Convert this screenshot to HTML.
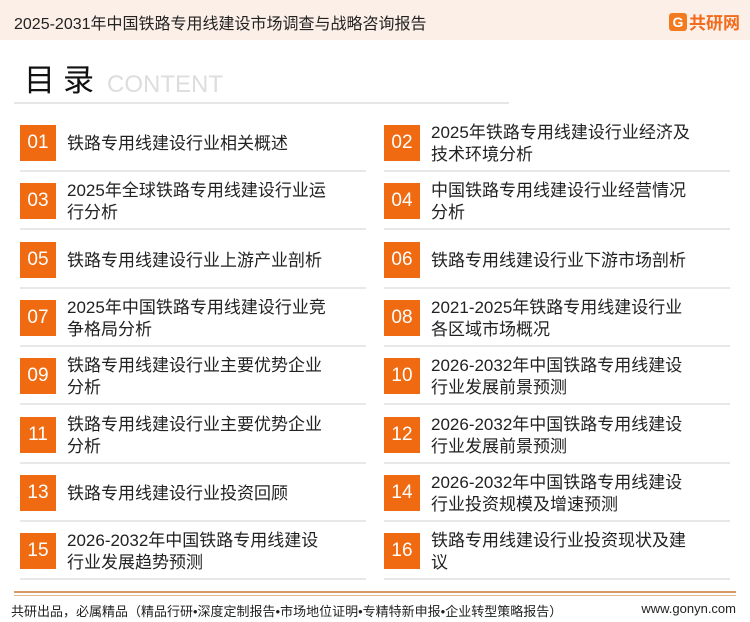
<!DOCTYPE html>
<html><head><meta charset="utf-8"><style>
*{margin:0;padding:0;box-sizing:border-box}
body{width:750px;height:622px;background:#fff;position:relative;overflow:hidden;font-family:"Liberation Sans","Noto Sans CJK SC",sans-serif;color:#222}
.hdr{position:absolute;left:0;top:0;width:750px;height:40px;background:#fcefe7}
.hdr .t{position:absolute;left:14px;top:10px;font-size:16px;color:#222}
.logo{position:absolute;right:10px;top:9px;font-size:17px;font-weight:bold;color:#f26a1b;display:flex;align-items:center;gap:2px}
.logo .g{width:18px;height:18px;background:#f47a20;border-radius:3px;color:#fff;font-size:14px;line-height:18px;text-align:center}
.mu{position:absolute;left:24px;top:64px;font-size:31px;line-height:34px;color:#111;letter-spacing:8px}
.ct{position:absolute;left:107px;top:72px;font-size:24px;line-height:26px;color:#ddd}
.sep{position:absolute;left:14px;top:102px;width:495px;height:2px;background:#e6e6e6}
.item{position:absolute;width:346px;height:46px}
.item .n{position:absolute;left:0;top:0;width:36px;height:36px;background:#ef6a10;color:#fff;font-size:19px;line-height:36px;text-align:center}
.item .x{position:absolute;left:47px;font-size:17px;line-height:22px;color:#222;white-space:nowrap}
.item:after{content:"";position:absolute;left:0;right:0;top:45px;height:2px;background:#e8e8e8}
.f1{position:absolute;left:14px;top:591px;width:722px;height:2px;background:#d99a68}
.f2{position:absolute;left:14px;top:595px;width:722px;height:1px;background:#e2b894}
.ft{position:absolute;left:11px;top:601px;font-size:13px;color:#222}
.fr{position:absolute;right:14px;top:601px;font-size:13px;color:#222}
</style></head><body>
<div class="hdr"><div class="t">2025-2031年中国铁路专用线建设市场调查与战略咨询报告</div>
<div class="logo"><div class="g">G</div>共研网</div></div>
<div class="mu">目录</div><div class="ct">CONTENT</div>
<div class="sep"></div>

<div class="item" style="left:20px;top:125px"><div class="n">01</div><div class="x" style="top:8px">铁路专用线建设行业相关概述</div></div>
<div class="item" style="left:384px;top:125px"><div class="n">02</div><div class="x" style="top:-3px">2025年铁路专用线建设行业经济及<br>技术环境分析</div></div>

<div class="item" style="left:20px;top:183px"><div class="n">03</div><div class="x" style="top:-3px">2025年全球铁路专用线建设行业运<br>行分析</div></div>
<div class="item" style="left:384px;top:183px"><div class="n">04</div><div class="x" style="top:-3px">中国铁路专用线建设行业经营情况<br>分析</div></div>

<div class="item" style="left:20px;top:242px"><div class="n">05</div><div class="x" style="top:8px">铁路专用线建设行业上游产业剖析</div></div>
<div class="item" style="left:384px;top:242px"><div class="n">06</div><div class="x" style="top:8px">铁路专用线建设行业下游市场剖析</div></div>

<div class="item" style="left:20px;top:300px"><div class="n">07</div><div class="x" style="top:-3px">2025年中国铁路专用线建设行业竞<br>争格局分析</div></div>
<div class="item" style="left:384px;top:300px"><div class="n">08</div><div class="x" style="top:-3px">2021-2025年铁路专用线建设行业<br>各区域市场概况</div></div>

<div class="item" style="left:20px;top:358px"><div class="n">09</div><div class="x" style="top:-3px">铁路专用线建设行业主要优势企业<br>分析</div></div>
<div class="item" style="left:384px;top:358px"><div class="n">10</div><div class="x" style="top:-3px">2026-2032年中国铁路专用线建设<br>行业发展前景预测</div></div>

<div class="item" style="left:20px;top:417px"><div class="n">11</div><div class="x" style="top:-3px">铁路专用线建设行业主要优势企业<br>分析</div></div>
<div class="item" style="left:384px;top:417px"><div class="n">12</div><div class="x" style="top:-3px">2026-2032年中国铁路专用线建设<br>行业发展前景预测</div></div>

<div class="item" style="left:20px;top:475px"><div class="n">13</div><div class="x" style="top:8px">铁路专用线建设行业投资回顾</div></div>
<div class="item" style="left:384px;top:475px"><div class="n">14</div><div class="x" style="top:-3px">2026-2032年中国铁路专用线建设<br>行业投资规模及增速预测</div></div>

<div class="item" style="left:20px;top:533px"><div class="n">15</div><div class="x" style="top:-3px">2026-2032年中国铁路专用线建设<br>行业发展趋势预测</div></div>
<div class="item" style="left:384px;top:533px"><div class="n">16</div><div class="x" style="top:-3px">铁路专用线建设行业投资现状及建<br>议</div></div>

<div class="f1"></div><div class="f2"></div>
<div class="ft">共研出品，必属精品（精品行研•深度定制报告•市场地位证明•专精特新申报•企业转型策略报告）</div>
<div class="fr">www.gonyn.com</div>
</body></html>
